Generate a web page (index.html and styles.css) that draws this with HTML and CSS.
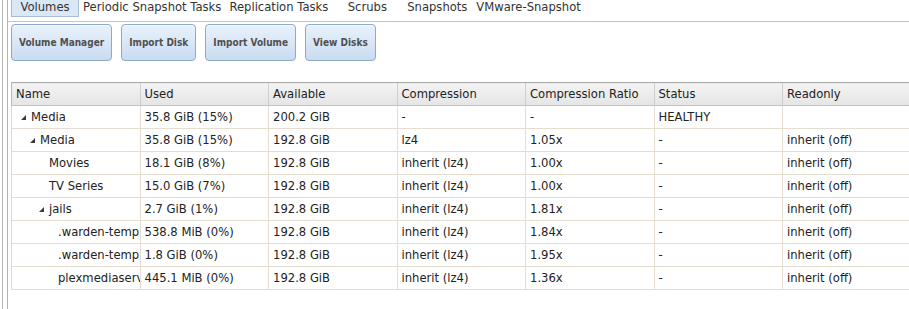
FILE: index.html
```html
<!DOCTYPE html>
<html lang="en">
<head>
  <meta charset="UTF-8" />
  <title>Storage - Volumes</title>
  <link rel="stylesheet" href="styles.css">
</head>
<body>

<div class="outer">
  <div class="pane">

    <div class="tabs">
      <span class="tab selected">Volumes</span>
      <span class="tab">Periodic Snapshot Tasks</span>
      <span class="tab">Replication Tasks</span>
      <span class="tab">Scrubs</span>
      <span class="tab">Snapshots</span>
      <span class="tab">VMware-Snapshot</span>
    </div>

    <div class="toolbar">
      <button class="btn">Volume Manager</button>
      <button class="btn">Import Disk</button>
      <button class="btn">Import Volume</button>
      <button class="btn">View Disks</button>
    </div>

    <table class="grid">
      <thead>
        <tr>
          <th>Name</th>
          <th>Used</th>
          <th>Available</th>
          <th>Compression</th>
          <th>Compression Ratio</th>
          <th>Status</th>
          <th>Readonly</th>
        </tr>
      </thead>
      <tbody>
        <tr>
          <td><div class="name lvl0"><span class="expando"><svg width="5" height="5" viewBox="0 0 5 5"><polygon points="5,0 5,5 0,5" fill="#3a3a3a"/></svg></span>Media</div></td>
          <td>35.8 GiB (15%)</td>
          <td>200.2 GiB</td>
          <td>-</td>
          <td>-</td>
          <td>HEALTHY</td>
          <td></td>
        </tr>
        <tr>
          <td><div class="name lvl1"><span class="expando"><svg width="5" height="5" viewBox="0 0 5 5"><polygon points="5,0 5,5 0,5" fill="#3a3a3a"/></svg></span>Media</div></td>
          <td>35.8 GiB (15%)</td>
          <td>192.8 GiB</td>
          <td>lz4</td>
          <td>1.05x</td>
          <td>-</td>
          <td>inherit (off)</td>
        </tr>
        <tr>
          <td><div class="name lvl2"><span class="expando"></span>Movies</div></td>
          <td>18.1 GiB (8%)</td>
          <td>192.8 GiB</td>
          <td>inherit (lz4)</td>
          <td>1.00x</td>
          <td>-</td>
          <td>inherit (off)</td>
        </tr>
        <tr>
          <td><div class="name lvl2"><span class="expando"></span>TV Series</div></td>
          <td>15.0 GiB (7%)</td>
          <td>192.8 GiB</td>
          <td>inherit (lz4)</td>
          <td>1.00x</td>
          <td>-</td>
          <td>inherit (off)</td>
        </tr>
        <tr>
          <td><div class="name lvl2"><span class="expando"><svg width="5" height="5" viewBox="0 0 5 5"><polygon points="5,0 5,5 0,5" fill="#3a3a3a"/></svg></span>jails</div></td>
          <td>2.7 GiB (1%)</td>
          <td>192.8 GiB</td>
          <td>inherit (lz4)</td>
          <td>1.81x</td>
          <td>-</td>
          <td>inherit (off)</td>
        </tr>
        <tr>
          <td><div class="name lvl3"><span class="expando"></span><span class="clip">.warden-templ</span></div></td>
          <td>538.8 MiB (0%)</td>
          <td>192.8 GiB</td>
          <td>inherit (lz4)</td>
          <td>1.84x</td>
          <td>-</td>
          <td>inherit (off)</td>
        </tr>
        <tr>
          <td><div class="name lvl3"><span class="expando"></span><span class="clip">.warden-templ</span></div></td>
          <td>1.8 GiB (0%)</td>
          <td>192.8 GiB</td>
          <td>inherit (lz4)</td>
          <td>1.95x</td>
          <td>-</td>
          <td>inherit (off)</td>
        </tr>
        <tr>
          <td><div class="name lvl3"><span class="expando"></span><span class="clip">plexmediaserv</span></div></td>
          <td>445.1 MiB (0%)</td>
          <td>192.8 GiB</td>
          <td>inherit (lz4)</td>
          <td>1.36x</td>
          <td>-</td>
          <td>inherit (off)</td>
        </tr>
      </tbody>
    </table>

  </div>
</div>

</body>
</html>
```

FILE: styles.css
```css
body {
  margin: 0;
  font-family: "DejaVu Sans", Verdana, sans-serif;
  font-size: 11.6px;
  color: #222;
  background: #fff;
  overflow: hidden;
}

.outer {
  margin-left: 2px;
  border-left: 1px solid #b4b4b4;
  padding-left: 4px;
}

.pane {
  border-left: 1px solid #b4b4b4;
  padding-left: 3px;
  min-height: 309px;
}

/* tab strip */
.tabs {
  display: flex;
  align-items: flex-start;
  margin-left: -3px;
  padding-left: 3px;
  height: 21px;
  border-bottom: 1px solid #c4c4c4;
}

.tab {
  box-sizing: border-box;
  min-width: 70px;
  height: 17px;
  padding: 0 4px;
  line-height: 14px;
  text-align: center;
  color: #333;
  white-space: nowrap;
}

.tab.selected {
  min-width: 68px;
  background: #dae7f5;
  border: 1px solid #a6bbd4;
  border-top: none;
}

/* buttons */
.toolbar {
  display: flex;
  gap: 9px;
  padding-top: 2px;
}

.btn {
  height: 37px;
  padding: 0 7px;
  font-family: "DejaVu Sans Condensed", "DejaVu Sans", Verdana, sans-serif;
  font-size: 10px;
  font-weight: bold;
  color: #505050;
  background: linear-gradient(#e9f2fc, #c9dcf1);
  border: 1px solid #8fa9c9;
  border-radius: 4px;
  box-shadow: inset 0 1px 0 #f6faff;
}

/* grid */
.grid {
  width: 900px;
  margin-top: 21px;
  border-collapse: collapse;
  table-layout: fixed;
}

.grid th, .grid td {
  height: 22px;
  padding: 0 4px;
  text-align: left;
  white-space: nowrap;
  overflow: hidden;
  font-weight: normal;
}

.grid th {
  background: linear-gradient(#f3f3f3, #e5e5e5);
  border-top: 1px solid #a9a9a9;
  border-bottom: 1px solid #c2c2c2;
  border-left: 1px solid #cfcfcf;
}

.grid th:first-child {
  border-left: 1px solid #b8b8b8;
}

.grid td {
  border-bottom: 1px solid #e6ddd1;
  border-left: 1px solid #e6ddd1;
}

.grid td:first-child {
  padding: 0;
  border-left: 1px solid #d8d8d8;
}

.name {
  display: flex;
  align-items: center;
  padding-left: 3px;
  overflow: hidden;
  white-space: nowrap;
}

.lvl1 { padding-left: 12px; }
.lvl2 { padding-left: 21px; }
.lvl3 { padding-left: 30px; }

.expando {
  flex: none;
  width: 16px;
  display: flex;
  align-items: center;
}

.expando svg {
  margin-left: 6px;
}

.clip {
  overflow: hidden;
}
```
